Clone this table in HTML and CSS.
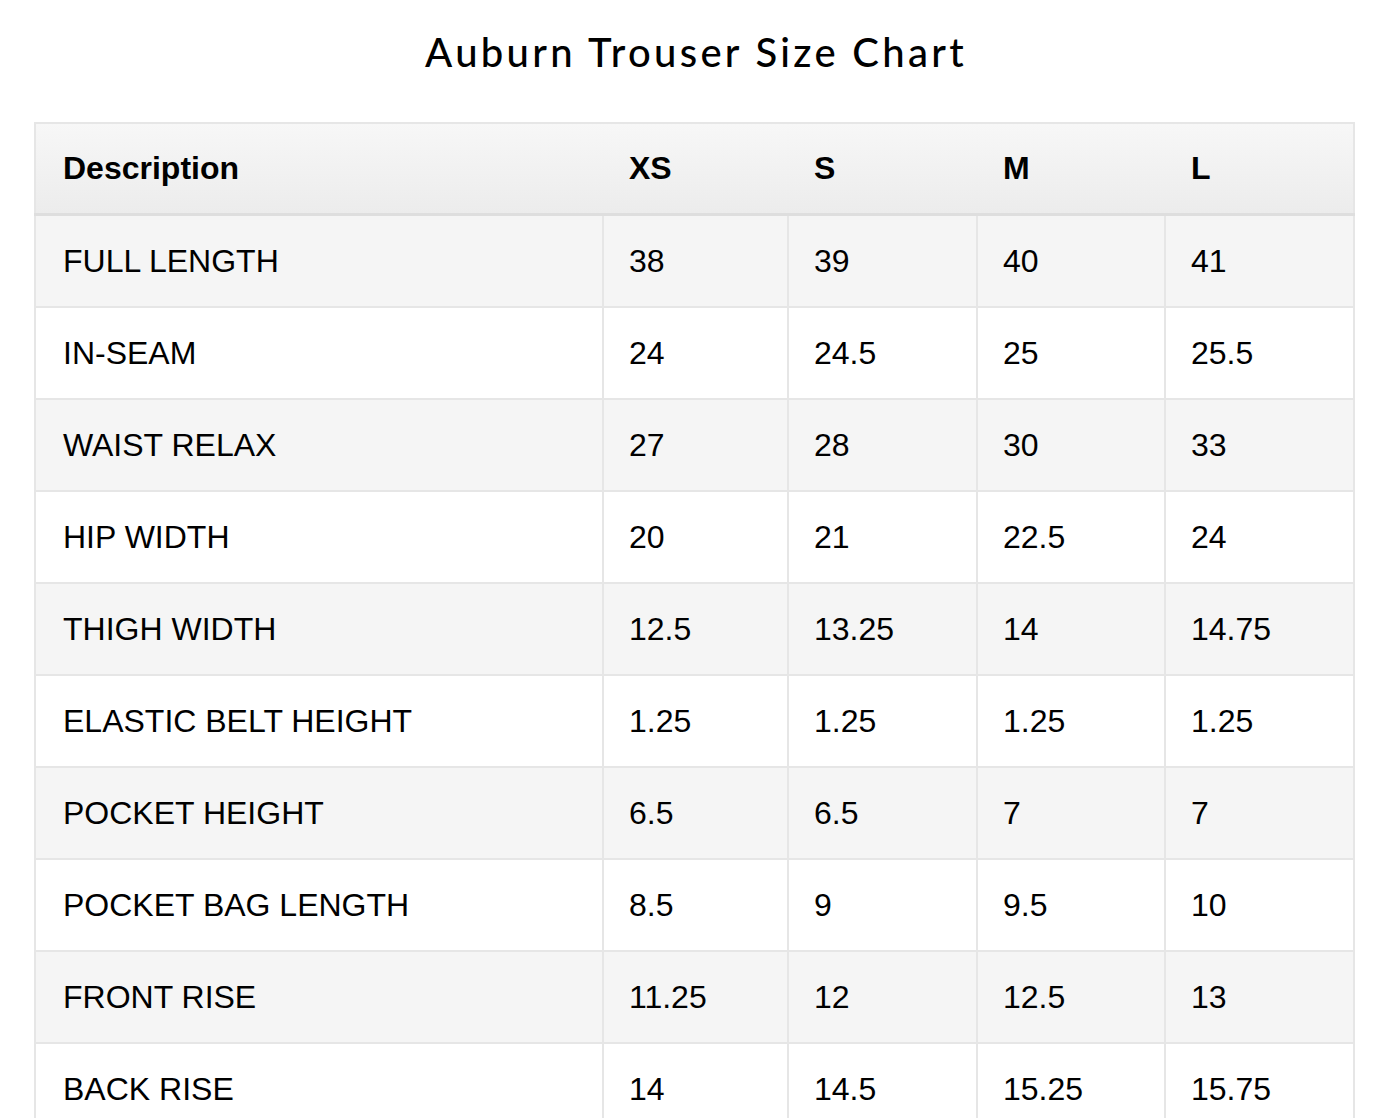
FILE: index.html
```html
<!DOCTYPE html>
<html>
<head>
<meta charset="utf-8">
<link rel="stylesheet" href="styles.css">
</head>
<body>
<h1 class="title">Auburn Trouser Size Chart</h1>
<table class="chart">
  <colgroup>
    <col class="c-desc"><col class="c-size"><col class="c-size2"><col class="c-size3"><col class="c-size4">
  </colgroup>
  <thead>
    <tr><th>Description</th><th>XS</th><th>S</th><th>M</th><th>L</th></tr>
  </thead>
  <tbody>
    <tr><td>FULL LENGTH</td><td>38</td><td>39</td><td>40</td><td>41</td></tr>
    <tr><td>IN-SEAM</td><td>24</td><td>24.5</td><td>25</td><td>25.5</td></tr>
    <tr><td>WAIST RELAX</td><td>27</td><td>28</td><td>30</td><td>33</td></tr>
    <tr><td>HIP WIDTH</td><td>20</td><td>21</td><td>22.5</td><td>24</td></tr>
    <tr><td>THIGH WIDTH</td><td>12.5</td><td>13.25</td><td>14</td><td>14.75</td></tr>
    <tr><td>ELASTIC BELT HEIGHT</td><td>1.25</td><td>1.25</td><td>1.25</td><td>1.25</td></tr>
    <tr><td>POCKET HEIGHT</td><td>6.5</td><td>6.5</td><td>7</td><td>7</td></tr>
    <tr><td>POCKET BAG LENGTH</td><td>8.5</td><td>9</td><td>9.5</td><td>10</td></tr>
    <tr><td>FRONT RISE</td><td>11.25</td><td>12</td><td>12.5</td><td>13</td></tr>
    <tr><td>BACK RISE</td><td>14</td><td>14.5</td><td>15.25</td><td>15.75</td></tr>
  </tbody>
</table>
</body>
</html>
```
FILE: styles.css
```css
html, body {
  margin: 0;
  padding: 0;
  background: #ffffff;
}
body {
  font-family: "Liberation Sans", Arial, sans-serif;
  color: #000;
  overflow: hidden;
}
.title {
  margin: 0;
  padding-top: 26px;
  height: 96px;
  box-sizing: border-box;
  text-align: center;
  font-family: Lato, "Noto Sans", sans-serif;
  font-weight: 500;
  font-size: 40px;
  line-height: 52px;
  letter-spacing: 3.3px;
  color: #000;
}
.chart {
  margin: 26px 0 0 34px;
  width: 1319px;
  border-collapse: collapse;
  table-layout: fixed;
  border: 2px solid #e6e6e6;
}
.c-desc { width: 568px; }
.c-size { width: 185px; }
.c-size2 { width: 189px; }
.c-size3 { width: 188px; }
.c-size4 { width: 189px; }
.chart th {
  height: 89px;
  padding: 0 0 0 26px;
  text-align: left;
  font-size: 32px;
  font-weight: 700;
  background: linear-gradient(#f7f7f7, #ececec);
  border-bottom: 3px solid #dedede;
}
.chart th:first-child {
  padding-left: 27px;
}
.chart td {
  height: 90px;
  padding: 0 0 0 25px;
  font-size: 32px;
  border: 2px solid #e6e6e6;
  box-sizing: content-box;
}
.chart td:first-child {
  padding-left: 27px;
}
.chart tbody tr:nth-child(odd) td {
  background: #f5f5f5;
}
.chart tbody tr:nth-child(even) td {
  background: #ffffff;
}
```
